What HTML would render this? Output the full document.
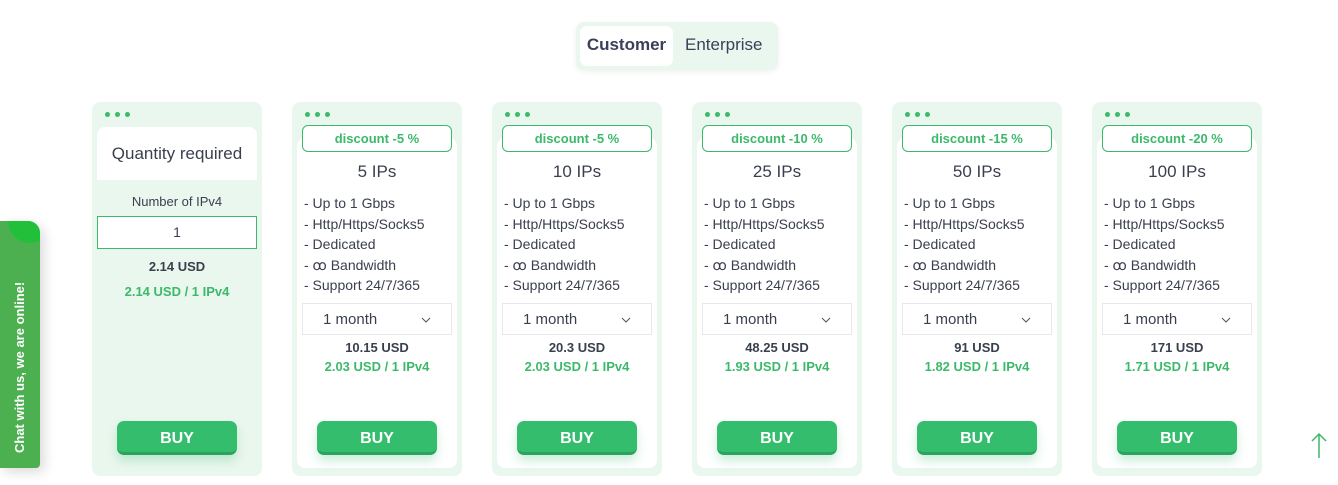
<!DOCTYPE html>
<html><head><meta charset="utf-8"><style>
*{margin:0;padding:0;box-sizing:border-box}
body{width:1338px;height:485px;background:#fff;font-family:"Liberation Sans",sans-serif;color:#3a3f4e;position:relative;overflow:hidden}
.a{position:absolute}
.card{position:absolute;top:102px;width:170px;height:374px;background:#eaf7ee;border-radius:8px}
.dots{position:absolute;top:10px;left:13px;display:flex;height:5px}
.dots i{display:block;width:5px;height:5px;border-radius:50%;background:#3cb96a;margin-right:5px}
.inner{position:absolute;left:5px;top:36px;width:160px;height:330px;background:#fff;border-radius:8px}
.badge{position:absolute;left:10px;top:23px;width:150px;height:27px;border:1px solid #3cb96a;border-radius:6px;background:#fff;color:#3cb96a;font-size:13px;font-weight:bold;text-align:center;line-height:25px}
.ips{position:absolute;left:0;width:170px;top:60px;text-align:center;font-size:17px}
.feat{position:absolute;left:12px;top:91px;font-size:14px;line-height:20.5px}
.sel{position:absolute;left:10px;top:201px;width:150px;height:32px;border:1px solid #e8e8ec;background:#fff;font-size:15px;line-height:32px;padding-left:20px}
.sel svg{position:absolute;right:20px;top:13px}
.p1{position:absolute;left:0;width:170px;top:238px;text-align:center;font-size:13px;font-weight:bold}
.p2{position:absolute;left:0;width:170px;top:257px;text-align:center;font-size:13px;font-weight:bold;color:#3cb96a}
.buy{position:absolute;left:25px;top:319px;width:120px;height:34px;background:#35bd6e;border-radius:7px;border-bottom:3px solid #2aa35c;color:#fff;font-weight:bold;font-size:16px;text-align:center;line-height:35px;box-shadow:0 6px 10px rgba(53,189,110,.25)}
</style></head><body>
<div class="a" style="left:576px;top:22px;width:202px;height:48px;background:#eaf7ee;border-radius:8px;box-shadow:0 2px 6px rgba(0,0,0,.06)"></div>
<div class="a" style="left:580px;top:26px;width:93px;height:40px;background:#fff;border-radius:7px;font-size:17px;font-weight:bold;line-height:38px;text-align:center;color:#3a3f5a">Customer</div>
<div class="a" style="left:685px;top:26px;font-size:17px;line-height:38px;color:#3a3f5a">Enterprise</div>

<div class="card" style="left:92px"><div class="dots"><i></i><i></i><i></i></div>
<div class="a" style="left:5px;top:25px;width:160px;height:53px;background:#fff;border-radius:8px 8px 0 0;font-size:17px;text-align:center;line-height:53px">Quantity required</div>
<div class="a" style="left:0;width:170px;top:92px;text-align:center;font-size:13px">Number of IPv4</div>
<div class="a" style="left:5px;top:114px;width:160px;height:33px;border:1px solid #3cb96a;background:#fff;text-align:center;line-height:31px;font-size:14px">1</div>
<div class="p1" style="top:157px">2.14 USD</div>
<div class="p2" style="top:182px">2.14 USD / 1 IPv4</div>
<div class="buy">BUY</div></div>

<div class="card" style="left:292px"><div class="dots"><i></i><i></i><i></i></div><div class="inner"></div><div class="badge">discount -5 %</div><div class="ips">5 IPs</div><div class="feat">- Up to 1 Gbps<br>- Http/Https/Socks5<br>- Dedicated<br>- ꝏ Bandwidth<br>- Support 24/7/365</div><div class="sel">1 month<svg width="10" height="6"><path d="M1 1l4 4 4-4" stroke="#555" fill="none"/></svg></div><div class="p1">10.15 USD</div><div class="p2">2.03 USD / 1 IPv4</div><div class="buy">BUY</div></div>

<div class="card" style="left:492px"><div class="dots"><i></i><i></i><i></i></div><div class="inner"></div><div class="badge">discount -5 %</div><div class="ips">10 IPs</div><div class="feat">- Up to 1 Gbps<br>- Http/Https/Socks5<br>- Dedicated<br>- ꝏ Bandwidth<br>- Support 24/7/365</div><div class="sel">1 month<svg width="10" height="6"><path d="M1 1l4 4 4-4" stroke="#555" fill="none"/></svg></div><div class="p1">20.3 USD</div><div class="p2">2.03 USD / 1 IPv4</div><div class="buy">BUY</div></div>

<div class="card" style="left:692px"><div class="dots"><i></i><i></i><i></i></div><div class="inner"></div><div class="badge">discount -10 %</div><div class="ips">25 IPs</div><div class="feat">- Up to 1 Gbps<br>- Http/Https/Socks5<br>- Dedicated<br>- ꝏ Bandwidth<br>- Support 24/7/365</div><div class="sel">1 month<svg width="10" height="6"><path d="M1 1l4 4 4-4" stroke="#555" fill="none"/></svg></div><div class="p1">48.25 USD</div><div class="p2">1.93 USD / 1 IPv4</div><div class="buy">BUY</div></div>

<div class="card" style="left:892px"><div class="dots"><i></i><i></i><i></i></div><div class="inner"></div><div class="badge">discount -15 %</div><div class="ips">50 IPs</div><div class="feat">- Up to 1 Gbps<br>- Http/Https/Socks5<br>- Dedicated<br>- ꝏ Bandwidth<br>- Support 24/7/365</div><div class="sel">1 month<svg width="10" height="6"><path d="M1 1l4 4 4-4" stroke="#555" fill="none"/></svg></div><div class="p1">91 USD</div><div class="p2">1.82 USD / 1 IPv4</div><div class="buy">BUY</div></div>

<div class="card" style="left:1092px"><div class="dots"><i></i><i></i><i></i></div><div class="inner"></div><div class="badge">discount -20 %</div><div class="ips">100 IPs</div><div class="feat">- Up to 1 Gbps<br>- Http/Https/Socks5<br>- Dedicated<br>- ꝏ Bandwidth<br>- Support 24/7/365</div><div class="sel">1 month<svg width="10" height="6"><path d="M1 1l4 4 4-4" stroke="#555" fill="none"/></svg></div><div class="p1">171 USD</div><div class="p2">1.71 USD / 1 IPv4</div><div class="buy">BUY</div></div>

<div class="a" style="left:0;top:221px;width:40px;height:247px;background:#4caf50;border-radius:0 12px 4px 0;overflow:hidden;box-shadow:4px 4px 12px rgba(0,0,0,.15)">
<div class="a" style="left:8px;top:-22px;width:44px;height:44px;border-radius:50%;background:#22c03a"></div>
<div class="a" style="left:20px;top:232px;transform-origin:0 0;transform:rotate(-90deg);white-space:nowrap;color:#fff;font-weight:bold;font-size:13px;line-height:0">Chat with us, we are online!</div></div>

<svg class="a" style="left:1310px;top:432px" width="18" height="28"><path d="M9 26V2M2 9l7-7 7 7" stroke="#3cb96a" stroke-width="1.5" fill="none"/></svg>
</body></html>
